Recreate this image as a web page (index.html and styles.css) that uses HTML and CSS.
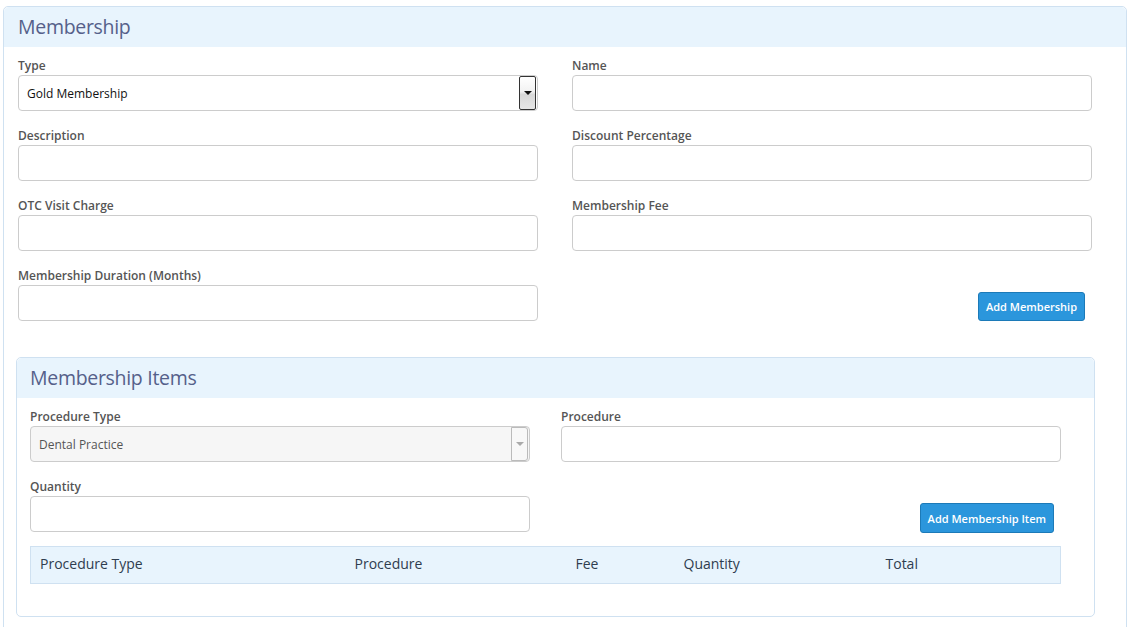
FILE: index.html
```html
<!DOCTYPE html>
<html>
<head>
<meta charset="utf-8">
<link rel="stylesheet" href="styles.css">
</head>
<body>
<div class="panel outer">
  <div class="panel-head"><h2>Membership</h2></div>
  <div class="panel-body outer-body">
    <div class="grid outer-grid">
      <div class="field">
        <label>Type</label>
        <div class="select">
          <span>Gold Membership</span>
          <span class="sel-btn"><span class="tri"></span></span>
        </div>
      </div>
      <div class="field"><label>Name</label><div class="input"></div></div>
      <div class="field"><label>Description</label><div class="input"></div></div>
      <div class="field"><label>Discount Percentage</label><div class="input"></div></div>
      <div class="field"><label>OTC Visit Charge</label><div class="input"></div></div>
      <div class="field"><label>Membership Fee</label><div class="input"></div></div>
      <div class="field"><label>Membership Duration (Months)</label><div class="input"></div></div>
      <div class="field action"><button class="btn btn-outer">Add Membership</button></div>
    </div>

    <div class="panel inner">
      <div class="panel-head inner-head"><h2>Membership Items</h2></div>
      <div class="panel-body inner-body">
        <div class="grid inner-grid">
          <div class="field">
            <label>Procedure Type</label>
            <div class="select disabled">
              <span>Dental Practice</span>
              <span class="sel-btn"><span class="tri"></span></span>
            </div>
          </div>
          <div class="field"><label>Procedure</label><div class="input"></div></div>
          <div class="field"><label>Quantity</label><div class="input"></div></div>
          <div class="field action"><button class="btn btn-inner">Add Membership Item</button></div>
        </div>
        <table class="items">
          <thead>
            <tr>
              <th class="c1">Procedure Type</th>
              <th class="c2">Procedure</th>
              <th class="c3">Fee</th>
              <th class="c4">Quantity</th>
              <th class="c5">Total</th>
            </tr>
          </thead>
        </table>
      </div>
    </div>
  </div>
</div>
</body>
</html>
```
FILE: styles.css
```css
* { box-sizing: border-box; }
html, body { margin: 0; padding: 0; background: #fff; }
body {
  font-family: "Open Sans", "Noto Sans", sans-serif;
  color: #333;
  padding: 6px 4px 0 3px;
  height: 627px;
  overflow: hidden;
}
.panel {
  border: 1px solid #cfe1f1;
  border-radius: 5px;
  background: #fff;
}
.outer { height: 700px; }
.panel-head {
  background: #e8f4fd;
  height: 40px;
  padding-left: 14px;
  padding-bottom: 2px;
  border-radius: 5px 5px 0 0;
  display: flex;
  align-items: center;
}
.panel-head h2 {
  margin: 0;
  font-size: 19.5px;
  font-weight: 400;
  color: #55608a;
  letter-spacing: -0.3px;
}
.outer-body { padding: 10px 34px 0 12px; }
.grid {
  display: grid;
  row-gap: 16px;
}
.outer-grid {
  grid-template-columns: 520px 520px;
  column-gap: 34px;
  margin-left: 2px;
}
.field { display: flex; flex-direction: column; }
.field label {
  font-size: 12px;
  font-weight: 600;
  line-height: 17px;
  color: #555;
  margin-bottom: 1px;
}
.input, .select {
  height: 36px;
  border: 1px solid #ccc;
  border-radius: 4px;
  background: #fff;
}
.select {
  display: flex;
  align-items: center;
  justify-content: space-between;
  padding: 0 0 0 8px;
  font-size: 12px;
  color: #111;
}
.sel-btn {
  width: 17px;
  height: 34px;
  border: 1px solid #333;
  border-radius: 2px;
  margin-right: 1px;
  background: linear-gradient(#ffffff 0%, #f2f2f2 45%, #d8d8d8 55%, #e6e6e6 100%);
  display: flex;
  align-items: center;
  justify-content: center;
}
.tri {
  width: 0; height: 0;
  border-left: 4px solid transparent;
  border-right: 4px solid transparent;
  border-top: 4px solid #111;
}
.select.disabled {
  background: #f6f6f6;
  color: #555;
}
.select.disabled .sel-btn {
  border-color: #bbb;
  background: #f8f8f8;
  border-radius: 0 3px 3px 0;
  height: 34px;
}
.select.disabled .tri { border-top-color: #aaa; }
.action {
  align-items: flex-end;
  justify-content: flex-end;
  padding-right: 7px;
}
.btn {
  font-family: inherit;
  font-size: 11px;
  font-weight: 600;
  color: #fff;
  background: #2b96dc;
  border: 1px solid #1c7ab8;
  border-radius: 3px;
  padding: 0 7px;
  height: 29px;
  cursor: pointer;
}
.btn-outer { margin-bottom: 0; }
.btn-inner { height: 30px; margin-bottom: -1px; }
.inner {
  margin-top: 36px;
  width: 1079px;
  height: 260px;
}
.inner-head { height: 40px; padding-left: 13px; }
.inner-body { padding: 10px 32px 0 13px; }
.inner-grid {
  grid-template-columns: 500px 500px;
  column-gap: 31px;
  row-gap: 16px;
}
.items {
  margin-top: 14px;
  width: 1031px;
  border-collapse: collapse;
  table-layout: fixed;
}
.items th {
  background: #e8f4fd;
  border-top: 1px solid #cfe1f1;
  border-bottom: 1px solid #cfe1f1;
  height: 37px;
  padding: 0 10px 3px 9px;
  text-align: left;
  font-size: 14px;
  font-weight: 400;
  color: #2f3d4f;
}
.items th.c1 { border-left: 1px solid #cfe1f1; width: 315px; }
.items th.c2 { width: 221px; }
.items th.c3 { width: 108px; }
.items th.c4 { width: 202px; }
.items th.c5 { border-right: 1px solid #cfe1f1; }
```
